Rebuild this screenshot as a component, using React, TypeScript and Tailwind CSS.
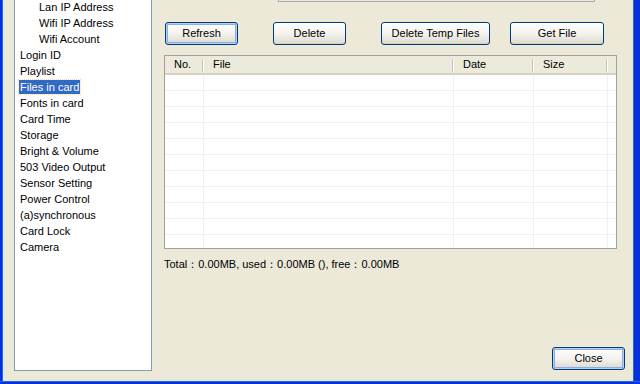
import React from 'react';

const font = "font-['Tahoma','Liberation_Sans',sans-serif]";

const treeItems: { label: string; indent?: boolean; selected?: boolean }[] = [
  { label: 'Lan IP Address', indent: true },
  { label: 'Wifi IP Address', indent: true },
  { label: 'Wifi Account', indent: true },
  { label: 'Login ID' },
  { label: 'Playlist' },
  { label: 'Files in card', selected: true },
  { label: 'Fonts in card' },
  { label: 'Card Time' },
  { label: 'Storage' },
  { label: 'Bright & Volume' },
  { label: '503 Video Output' },
  { label: 'Sensor Setting' },
  { label: 'Power Control' },
  { label: '(a)synchronous' },
  { label: 'Card Lock' },
  { label: 'Camera' },
];

const XpButton: React.FC<{ label: string; width: string; isDefault?: boolean }> = ({ label, width, isDefault }) => (
  <button
    className={`${width} h-[23px] rounded-[3px] border border-[#003c74] bg-gradient-to-b from-[#ffffff] via-[#f4f3ee] to-[#dcd9cc] text-[11px] text-black flex items-center justify-center ${
      isDefault ? 'shadow-[inset_0_0_0_1px_#b8d0f5,inset_0_0_0_2px_#89ade4]' : 'shadow-[inset_0_-1px_0_#d6d0c5]'
    }`}
  >
    {label}
  </button>
);

const columns = [
  { label: 'No.', w: 'w-[39px]' },
  { label: 'File', w: 'w-[250px]' },
  { label: 'Date', w: 'w-[80px]' },
  { label: 'Size', w: 'w-[74px]' },
];

const App: React.FC = () => {
  const rows = Array.from({ length: 11 });

  return (
    <div className={`w-[640px] h-[384px] flex flex-col bg-[#ece9d8] overflow-hidden ${font}`}>
      <div className="flex flex-1 min-h-0">
        <div className="w-[3px] bg-[#0831d9] border-r border-[#166aee]" />

        <div className="flex-1 flex">
          {/* tree */}
          <div className="ml-[11px] w-[138px] h-[371px] bg-white border border-t-0 border-[#7f9db9] pl-[4px] -mb-px">
            <div className="-mt-[1px]">
              {treeItems.map((it) => (
                <div key={it.label} className={`h-[16px] flex items-center ${it.indent ? 'pl-[19px]' : ''}`}>
                  <span
                    className={`text-[11px] leading-[14px] px-px ${
                      it.selected ? 'bg-[#316ac5] text-white outline outline-1 outline-dotted outline-[#ffd98a]' : 'text-black'
                    }`}
                  >
                    {it.label}
                  </span>
                </div>
              ))}
            </div>
          </div>

          {/* right content */}
          <div className="flex-1 flex flex-col pl-[12px]">
            <div className="ml-[114px] w-[317px] h-[2px] border border-t-0 border-[#a5acb5]" />

            <div className="mt-[20px] flex items-center">
              <div className="ml-[1px]"><XpButton label="Refresh" width="w-[73px]" isDefault /></div>
              <div className="ml-[35px]"><XpButton label="Delete" width="w-[73px]" /></div>
              <div className="ml-[35px]"><XpButton label="Delete Temp Files" width="w-[109px]" /></div>
              <div className="ml-[20px]"><XpButton label="Get File" width="w-[94px]" /></div>
            </div>

            <div className="mt-[10px] w-[453px] h-[194px] bg-white border border-[#a0a0a0] flex flex-col overflow-hidden">
              <div className="flex h-[19px] bg-[#ebeadb] border-b-2 border-[#d6d2c2] shrink-0">
                {columns.map((c) => (
                  <div key={c.label} className={`${c.w} flex items-center pl-[9px] text-[11px] text-black relative`}>
                    {c.label}
                    <div className="absolute right-0 top-[3px] h-[13px] w-[2px] border-l border-[#c7c5b2] border-r border-r-white" />
                  </div>
                ))}
              </div>
              <div className="flex-1">
                {rows.map((_, i) => (
                  <div key={i} className="flex h-[16px] border-b border-[#f0f0f0]">
                    {columns.map((c) => (
                      <div key={c.label} className={`${c.w} border-r border-[#f0f0f0]`} />
                    ))}
                  </div>
                ))}
              </div>
            </div>

            <div className="mt-[8px] text-[11px] text-black leading-[14px]">
              Total：0.00MB, used：0.00MB (), free：0.00MB
            </div>

            <div className="flex-1" />

            <div className="flex justify-end pr-[8px] mb-[11px]">
              <XpButton label="Close" width="w-[73px]" isDefault />
            </div>
          </div>
        </div>

        <div className="w-[7px] bg-[#0831d9] border-l border-[#166aee]" />
      </div>
      <div className="h-[3px] bg-[#0831d9] border-t border-[#166aee]" />
    </div>
  );
};

export default App;
